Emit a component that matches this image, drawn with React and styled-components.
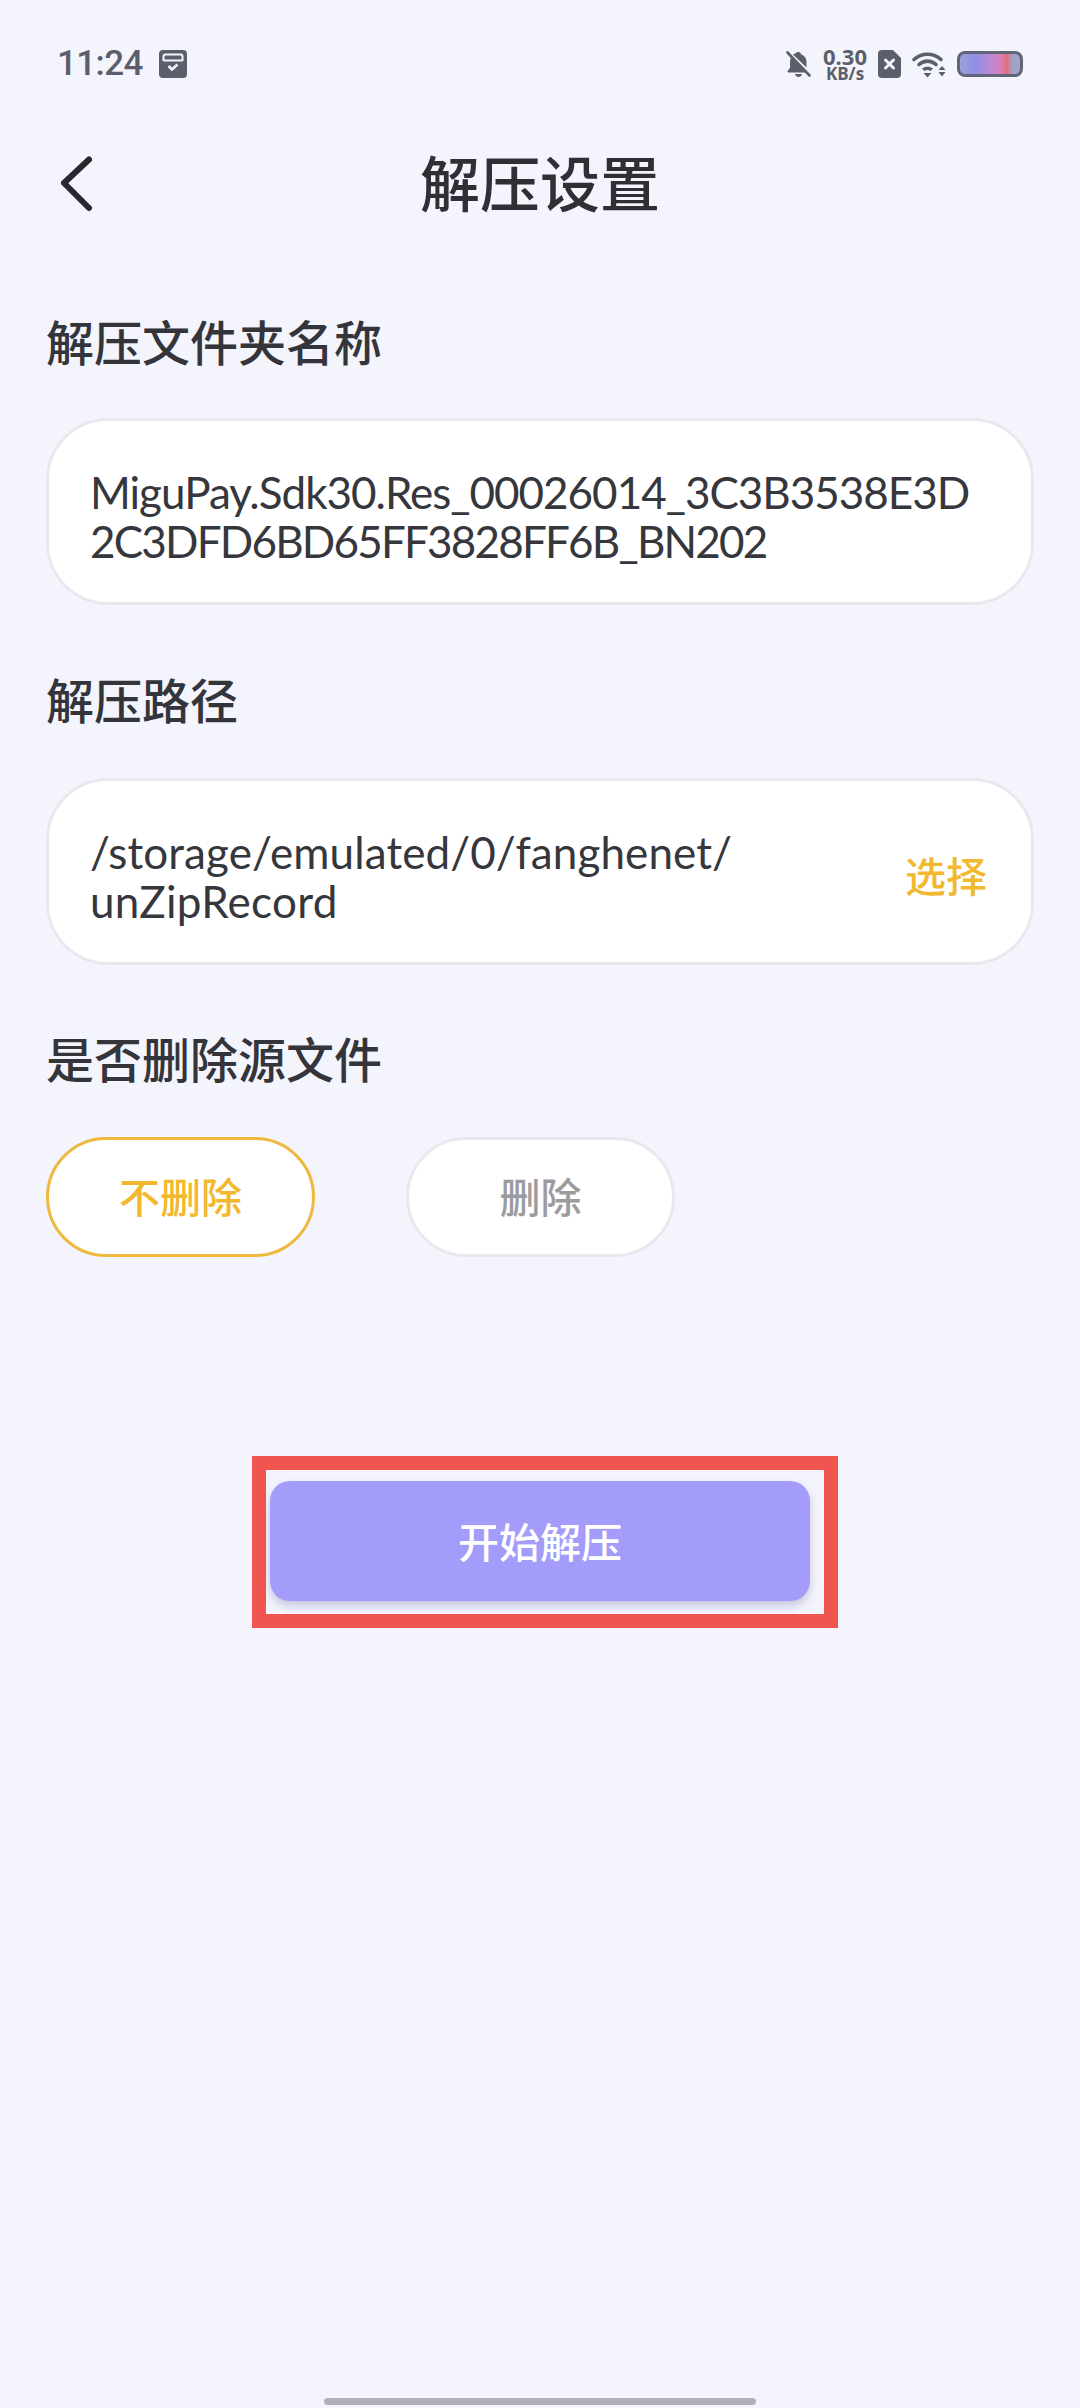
import React from 'react'
import styled, { createGlobalStyle } from 'styled-components'

const Global = createGlobalStyle`
html, body { margin: 0; padding: 0; background: #f3f4fc; }
body { font-family: "Noto Sans", "Noto Sans CJK SC", sans-serif; }
* { box-sizing: border-box; }
`

const Page = styled.div`
width: 1080px;
height: 2408px;
background: #f3f4fc;
display: flex;
flex-direction: column;
overflow: hidden;
`

const Status = styled.div`
height: 46px;
margin-top: 41px;
padding: 0 57px;
display: flex;
align-items: center;
`

const Time = styled.div`
font-family: Roboto, sans-serif;
font-size: 35px;
font-weight: 500;
color: #5c5e6b;
letter-spacing: -0.6px;
line-height: 46px;
margin-right: 16px;
`

const StatusRight = styled.div`
margin-left: auto;
display: flex;
align-items: center;
`

const Speed = styled.div`
width: 46px;
margin: 0 10px 0 11px;
display: flex;
flex-direction: column;
align-items: center;
font-family: "Open Sans", sans-serif;
font-weight: 700;
color: #5c5e6b;
`

const SpeedValue = styled.span`
font-size: 22px;
line-height: 20px;
`

const SpeedUnit = styled.span`
font-size: 17px;
line-height: 16px;
`

const IconSlot = styled.span`
display: flex;
margin-left: 11px;
`

const Battery = styled.div`
width: 66px;
height: 26px;
margin-left: 11px;
border: 3px solid #62657a;
border-radius: 8px;
background: linear-gradient(90deg, #9aa2d8 0%, #8f90e6 25%, #b88ad6 50%, #d97fb4 68%, #e0707e 78%, #9fa5c4 88%, #9fa5c4 100%);
`

const NavBar = styled.div`
height: 104px;
margin-top: 45px;
padding: 0 60px;
display: grid;
grid-template-columns: 1fr auto 1fr;
align-items: center;
`

const Title = styled.h1`
margin: 0 0 6px;
font-family: "Noto Sans CJK SC", sans-serif;
font-size: 60px;
font-weight: 500;
color: #2f3036;
line-height: 80px;
`

const Content = styled.div`
padding: 0 46px;
display: flex;
flex-direction: column;
`

const Label = styled.div`
font-family: "Noto Sans CJK SC", sans-serif;
font-size: 48px;
font-weight: 500;
color: #34353b;
line-height: 64px;
margin-top: ${p => p.$top}px;
`

const Field = styled.div`
height: 187px;
margin-top: ${p => p.$top}px;
padding: 10px 44px 0 41px;
background: #fff;
border: 3px solid #e8e9ef;
border-radius: 62px;
display: flex;
align-items: center;
justify-content: space-between;
`

const FieldText = styled.div`
font-family: Lato, "Noto Sans", sans-serif;
font-size: 44px;
color: #36373c;
white-space: nowrap;
`

const FieldLine = styled.div`
line-height: 49px;
letter-spacing: ${p => p.$spacing || 0}px;
`

const Pick = styled.div`
margin-bottom: 6px;
font-family: "Noto Sans CJK SC", sans-serif;
font-size: 41px;
font-weight: 500;
color: #f2b82e;
`

const PillRow = styled.div`
margin-top: 48px;
display: flex;
gap: 91px;
`

const Pill = styled.div`
width: 269px;
height: 120px;
padding-bottom: 4px;
background: #fff;
border: 3px solid ${p => (p.$active ? '#efb93f' : '#e8e9ef')};
border-radius: 60px;
display: flex;
align-items: center;
justify-content: center;
font-family: "Noto Sans CJK SC", sans-serif;
font-size: 41px;
font-weight: 500;
color: ${p => (p.$active ? '#f2b82e' : '#9c9c9f')};
`

const ActionFrame = styled.div`
width: 586px;
height: 172px;
margin: 199px 0 0 252px;
padding: 11px 14px 13px 4px;
border: 14px solid #f0564f;
`

const Action = styled.div`
height: 120px;
padding-bottom: 2px;
background: #a49cfa;
border-radius: 20px;
box-shadow: 0 5px 9px rgba(90, 85, 150, 0.28);
display: flex;
align-items: center;
justify-content: center;
font-family: "Noto Sans CJK SC", sans-serif;
font-size: 41px;
font-weight: 500;
color: #fff;
`

const HomeBar = styled.div`
width: 432px;
height: 7px;
margin: auto auto 3px;
border-radius: 4px;
background: #b0b0b8;
`

const CalendarIcon = () => (
  <svg width="28" height="28" viewBox="0 0 28 28">
    <rect width="28" height="28" rx="4" fill="#5c5e6b" />
    <path d="M4.500 11V6.500a2 2 0 0 1 2-2h15a2 2 0 0 1 2 2V11" fill="none" stroke="#f3f4fc" strokeWidth="2" />
    <path d="M4.500 10.500h19" fill="none" stroke="#f3f4fc" strokeWidth="2" />
    <path d="M9.500 16l3.500 3.500 5.500-5" fill="none" stroke="#f3f4fc" strokeWidth="2.600" />
  </svg>
)

const BellOffIcon = () => (
  <svg width="25" height="27" viewBox="0 0 25 27">
    <path fill="#5c5e6b" d="M12.500 1c1.500 0 2.300 1 2.500 2.200C18.600 4.400 20.500 7.400 20.500 11v5.500L7 3.500c.8-.6 1.800-1 2.900-1.300C10.200 1.400 11 1 12.500 1zM4.800 6.500L19.500 21.500H2.500c-1 0-1.300-1-.7-1.700L4 17v-6c0-1.700.3-3.200.8-4.500zM9 23h7c-.3 1.700-1.800 3-3.500 3S9.300 24.700 9 23z" />
    <path d="M1.500 1.500l22 23" stroke="#5c5e6b" strokeWidth="2.600" strokeLinecap="round" />
  </svg>
)

const SimIcon = () => (
  <svg width="23" height="28" viewBox="0 0 23 28">
    <path fill="#5c5e6b" d="M4 0h11l8 8v16a4 4 0 0 1-4 4H4a4 4 0 0 1-4-4V4a4 4 0 0 1 4-4z" />
    <path d="M7.500 10l8 8m0-8l-8 8" stroke="#f3f4fc" strokeWidth="3" strokeLinecap="round" />
  </svg>
)

const WifiIcon = () => (
  <svg width="34" height="27" viewBox="0 0 34 27" fill="none">
    <g stroke="#5c5e6b" strokeWidth="3.600" strokeLinecap="round">
      <path d="M2 8.500C9.500 1.500 21.500 1.500 29 8.500" />
      <path d="M7 13.500C12 9 19 9 24 13.500" />
    </g>
    <path fill="#5c5e6b" d="M10 17.500c3-2.500 8-2.500 11 0l-2.500 2.500c-2-1.300-4-1.300-6 0zM11.500 22h8l-4 4.500z" />
    <path fill="#5c5e6b" d="M30 15l3.500 4h-7zM26.500 21h7L30 25.500z" />
  </svg>
)

const BackIcon = () => (
  <svg width="32" height="56" viewBox="0 0 32 56" fill="none">
    <path d="M29 3.500L4 27l25 25" stroke="#26282e" strokeWidth="6" strokeLinecap="round" strokeLinejoin="round" />
  </svg>
)

const App = () => (
  <Page>
    <Global />
    <Status>
      <Time>11:24</Time>
      <CalendarIcon />
      <StatusRight>
        <BellOffIcon />
        <Speed>
          <SpeedValue>0.30</SpeedValue>
          <SpeedUnit>KB/s</SpeedUnit>
        </Speed>
        <SimIcon />
        <IconSlot>
          <WifiIcon />
        </IconSlot>
        <Battery />
      </StatusRight>
    </Status>
    <NavBar>
      <BackIcon />
      <Title>解压设置</Title>
    </NavBar>
    <Content>
      <Label $top={72}>解压文件夹名称</Label>
      <Field $top={46}>
        <FieldText>
          <FieldLine $spacing={-1}>MiguPay.Sdk30.Res_00026014_3C3B3538E3D</FieldLine>
          <FieldLine $spacing={-1.8}>2C3DFD6BD65FF3828FF6B_BN202</FieldLine>
        </FieldText>
      </Field>
      <Label $top={61}>解压路径</Label>
      <Field $top={48}>
        <FieldText>
          <FieldLine $spacing={0.1}>/storage/emulated/0/fanghenet/</FieldLine>
          <FieldLine $spacing={0.3}>unZipRecord</FieldLine>
        </FieldText>
        <Pick>选择</Pick>
      </Field>
      <Label $top={60}>是否删除源文件</Label>
      <PillRow>
        <Pill $active>不删除</Pill>
        <Pill>删除</Pill>
      </PillRow>
    </Content>
    <ActionFrame>
      <Action>开始解压</Action>
    </ActionFrame>
    <HomeBar />
  </Page>
)

export default App
